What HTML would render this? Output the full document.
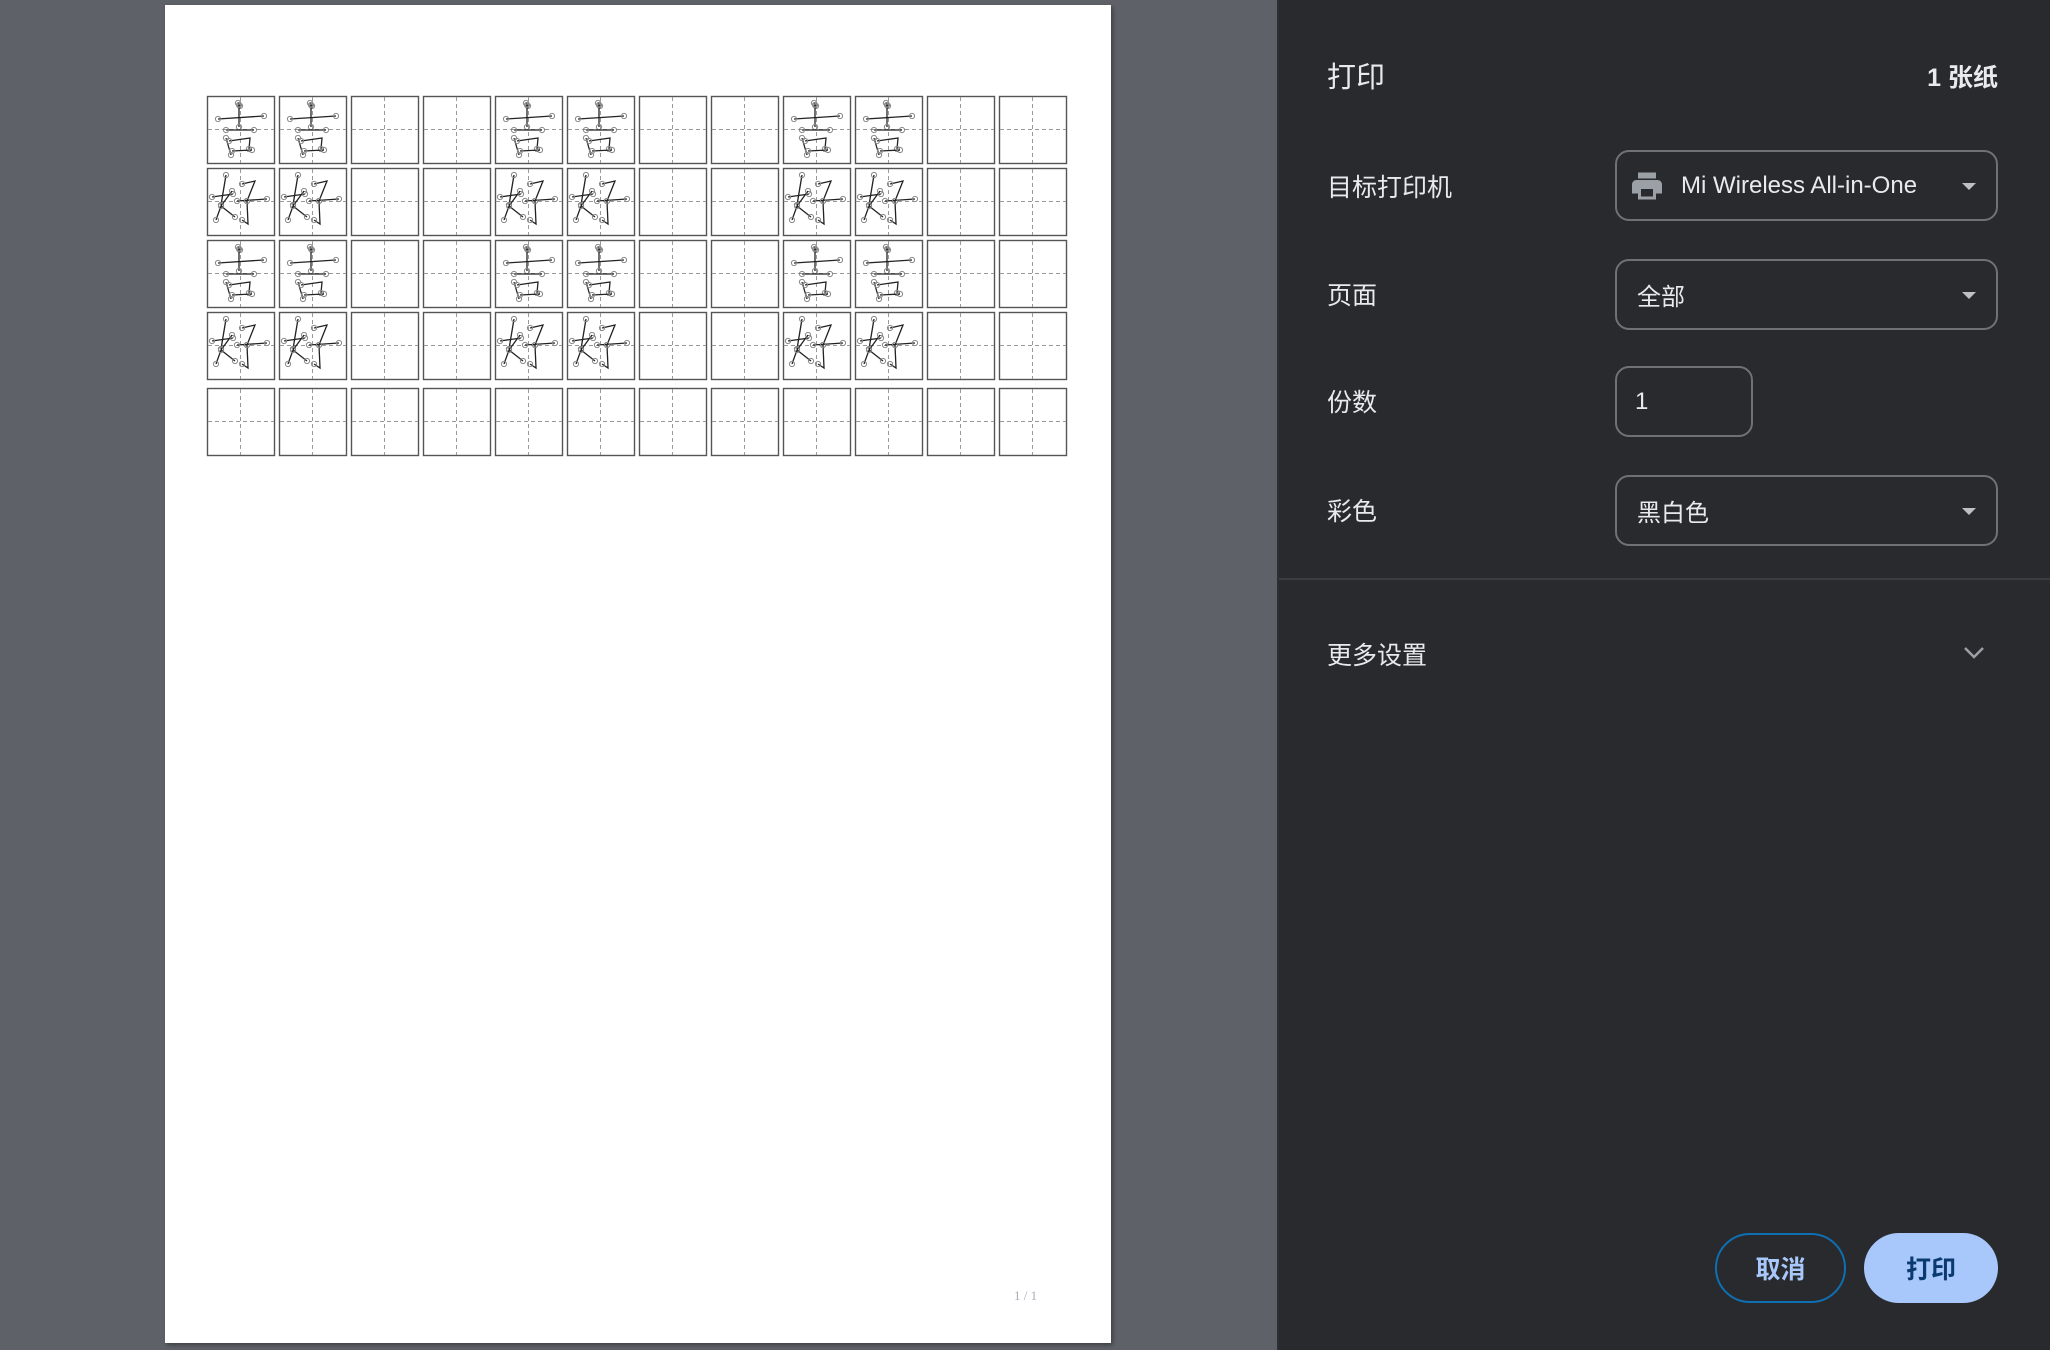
<!DOCTYPE html>
<html><head><meta charset="utf-8"><style>
*{margin:0;padding:0;box-sizing:border-box}
body{width:2050px;height:1350px;overflow:hidden;background:#5f6169;font-family:"Liberation Sans","Noto Sans CJK SC",sans-serif;position:relative}
.paper{position:absolute;left:165px;top:5px;width:946px;height:1338px;background:#fff;box-shadow:2px 2px 4px rgba(0,0,0,.35)}
.pn{position:absolute;left:1014px;top:1288px;font:13px "Liberation Serif",serif;color:#aab}
.panel{position:absolute;left:1277px;top:0;width:773px;height:1350px;background:#292a2e;border-left:2px solid #2e2f33}
.t{position:absolute;color:#e8eaed;font-size:27px}
.lab{position:absolute;left:48px;color:#e8eaed;font-size:25px;transform:translateY(-50%)}
.box{position:absolute;left:336px;width:383px;height:71px;border:2px solid #6f7175;border-radius:14px;color:#e8eaed;font-size:24px;display:flex;align-items:center;padding-left:20px}
.arr{position:absolute;right:20px;top:31px;width:0;height:0;border-left:7px solid transparent;border-right:7px solid transparent;border-top:7px solid #bdc1c6}
.sep{position:absolute;left:0;right:0;top:578px;height:2px;background:#3c3d41}
.btn{position:absolute;top:1233px;height:70px;border-radius:35px;font-size:25px;font-weight:bold;display:flex;align-items:center;justify-content:center}
</style></head><body>
<div class="paper"></div>
<svg id="g" style="position:absolute;left:0;top:0" width="1120" height="470"></svg>
<div class="pn">1 / 1</div>
<div class="panel">
<div class="t" style="left:48px;top:54px;font-size:29px">打印</div>
<div class="t" style="right:52px;top:58px;font-size:25px;font-weight:bold">1 张纸</div>
<div class="lab" style="top:186px">目标打印机</div>
<div class="box" style="top:150px;padding-left:12px">
<svg width="36" height="36" viewBox="0 0 24 24" style="margin-right:16px"><path fill="#9aa0a6" d="M19 8H5c-1.66 0-3 1.34-3 3v6h4v4h12v-4h4v-6c0-1.660-1.34-3-3-3zm-3 11H8v-5h8v5zM18 3H6v4h12V3z"/></svg>Mi Wireless All-in-One<div class="arr"></div></div>
<div class="lab" style="top:294px">页面</div>
<div class="box" style="top:259px">全部<div class="arr"></div></div>
<div class="lab" style="top:401px">份数</div>
<div class="box" style="top:366px;width:138px;padding-left:18px">1</div>
<div class="lab" style="top:510px">彩色</div>
<div class="box" style="top:475px">黑白色<div class="arr"></div></div>
<div class="sep"></div>
<div class="lab" style="top:654px">更多设置</div>
<svg style="position:absolute;left:684px;top:645px" width="22" height="16"><path d="M2 3l9 9 9-9" stroke="#9aa0a6" stroke-width="2.5" fill="none"/></svg>
<div class="btn" style="left:436px;width:131px;border:2px solid #0e6fb2;color:#a8c7fa">取消</div>
<div class="btn" style="left:585px;width:134px;background:#a8c7fa;color:#0b3a70">打印</div>
</div>
<script>
var s='',X0=207,Y=[96,168,240,312,388],P=72,C=67;
function ln(a){var r='<polyline points="'+a.map(function(p){return p.join(',')}).join(' ')+'" fill="none" stroke="#222" stroke-width="1.3"/>';r+='<circle cx="'+a[0][0]+'" cy="'+a[0][1]+'" r="2.6" fill="none" stroke="#888" stroke-width="1"/>';var e=a[a.length-1];r+='<circle cx="'+e[0]+'" cy="'+e[1]+'" r="2.6" fill="none" stroke="#888" stroke-width="1"/>';return r}
var ji=[[[31,7],[33,10]],[[32,9],[32,31]],[[11,23],[57,20]],[[19,34],[47,34]],[[19,42],[24,59]],[[22,45],[43,42],[42,53]],[[25,55],[45,54]]];
var hao=[[[19,7],[14,37]],[[5,29],[26,26]],[[25,23],[14,38],[9,52]],[[14,38],[28,49]],[[35,16],[48,13],[40,33]],[[30,33],[60,31]],[[40,33],[41,56],[35,52]]];
for(var r=0;r<5;r++)for(var c=0;c<12;c++){var x=X0+c*P,y=Y[r];
s+='<g transform="translate('+x+','+y+')"><rect x="0.5" y="0.5" width="'+C+'" height="'+C+'" fill="#fff" stroke="#555" stroke-width="1.4"/>';
s+='<path d="M'+(C/2)+' 1V'+C+'M1 '+(C/2)+'H'+C+'" stroke="#999" stroke-width="1" stroke-dasharray="4 3"/>';
if(r<4&&[0,1,4,5,8,9].indexOf(c)>=0){(r%2==0?ji:hao).forEach(function(a){s+=ln(a)})}
s+='</g>'}
document.getElementById('g').innerHTML=s;
</script>
</body></html>
